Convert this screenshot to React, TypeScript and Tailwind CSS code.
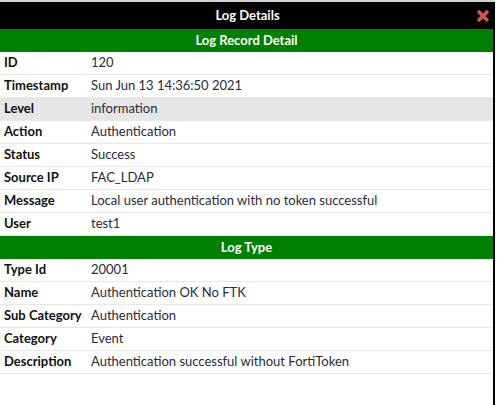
import React from "react";

const record: [string, string][] = [
  ["ID", "120"],
  ["Timestamp", "Sun Jun 13 14:36:50 2021"],
  ["Level", "information"],
  ["Action", "Authentication"],
  ["Status", "Success"],
  ["Source IP", "FAC_LDAP"],
  ["Message", "Local user authentication with no token successful"],
  ["User", "test1"],
];

const logType: [string, string][] = [
  ["Type Id", "20001"],
  ["Name", "Authentication OK No FTK"],
  ["Sub Category", "Authentication"],
  ["Category", "Event"],
  ["Description", "Authentication successful without FortiToken"],
];

function Row({ label, value, shaded }: { label: string; value: string; shaded?: boolean }) {
  return (
    <div
      className={`flex items-center h-[23px] border-b border-[#e8e8e8] ${shaded ? "bg-[#e6e6e6]" : "bg-white"}`}
    >
      <div className="w-[91px] pl-[4px] text-[13px] font-bold text-[#111] shrink-0">{label}</div>
      <div className="text-[13px] text-[#2a2a3a]">{value}</div>
    </div>
  );
}

function SectionHeader({ title }: { title: string }) {
  return (
    <div className="flex items-center justify-center bg-[#008000] text-white text-[13px] font-bold h-[23px]">
      {title}
    </div>
  );
}

export default function App() {
  return (
    <div className="w-[497px] h-[405px] bg-white overflow-hidden" style={{ fontFamily: "Lato, 'Open Sans', sans-serif" }}>
      <div className="w-[495px] h-full flex flex-col">
        <div className="h-[2px] bg-[#d4d4d4]" />
        <div className="relative h-[27px] bg-black flex items-center justify-center text-white text-[13px] font-bold">
          Log Details
          <svg
            className="absolute right-[5px] top-[7px]"
            width="14"
            height="14"
            viewBox="0 0 14 14"
          >
            <path d="M2 2 L12 12 M12 2 L2 12" stroke="#d9534f" strokeWidth="3.4" strokeLinecap="butt" />
          </svg>
        </div>
        <div className="flex-1 border-r-2 border-black flex flex-col">
          <SectionHeader title="Log Record Detail" />
          {record.map(([l, v]) => (
            <Row key={l} label={l} value={v} shaded={l === "Level"} />
          ))}
          <SectionHeader title="Log Type" />
          {logType.map(([l, v]) => (
            <Row key={l} label={l} value={v} />
          ))}
        </div>
      </div>
    </div>
  );
}
